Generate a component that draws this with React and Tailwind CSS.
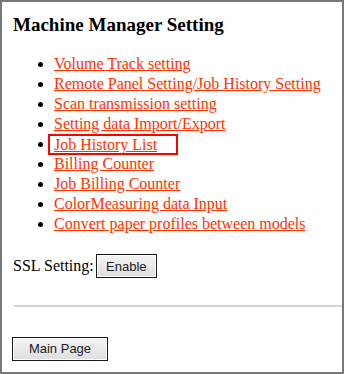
const links = [
  "Volume Track setting",
  "Remote Panel Setting/Job History Setting",
  "Scan transmission setting",
  "Setting data Import/Export",
  "Job History List",
  "Billing Counter",
  "Job Billing Counter",
  "ColorMeasuring data Input",
  "Convert paper profiles between models",
];

function Btn({ children, className = "" }) {
  return (
    <button
      className={`h-[24px] border border-[#1a1a1a] bg-gradient-to-b from-[#f4f4f4] to-[#dedede] shadow-[inset_0_0_0_1px_#ffffff] text-[13px] text-[#222] leading-none ${className}`}
      style={{ fontFamily: '"Liberation Sans", Arial, sans-serif' }}
    >
      {children}
    </button>
  );
}

export default function App() {
  return (
    <div
      className="w-[344px] h-[374px] border-2 border-[#777777] bg-white text-black overflow-hidden"
      style={{ fontFamily: '"Liberation Serif", "Times New Roman", serif' }}
    >
      <div className="pl-[11px] pt-[12px]">
        <h3 className="text-[19px] font-bold leading-[22px]">Machine Manager Setting</h3>

        <ul className="list-disc pl-[41px] mt-[18px] text-[16px] leading-[20px]">
          {links.map((name) =>
            name === "Job History List" ? (
              <li key={name} className="h-[20px]">
                <span className="inline-block align-top -ml-[6px] pl-[4px] w-[130px] h-[21px] border-2 border-[#ff0000] leading-[17px]">
                  <a href="#" className="text-[#ff3300] underline decoration-[#ff3300]">
                    {name}
                  </a>
                </span>
              </li>
            ) : (
              <li key={name} className="h-[20px]">
                <a href="#" className="text-[#ff3300] underline decoration-[#ff3300]">
                  {name}
                </a>
              </li>
            )
          )}
        </ul>

        <div className="flex items-center mt-[20px] text-[16px]">
          <span>SSL Setting:</span>
          <Btn className="ml-[2px] w-[61px]">Enable</Btn>
        </div>
      </div>

      <hr className="ml-[12px] mt-[27px] border-0 h-[2px] bg-[#d4d4d4]" />

      <div className="pl-[10px] mt-[29px]">
        <Btn className="w-[96px]">Main Page</Btn>
      </div>
    </div>
  );
}
